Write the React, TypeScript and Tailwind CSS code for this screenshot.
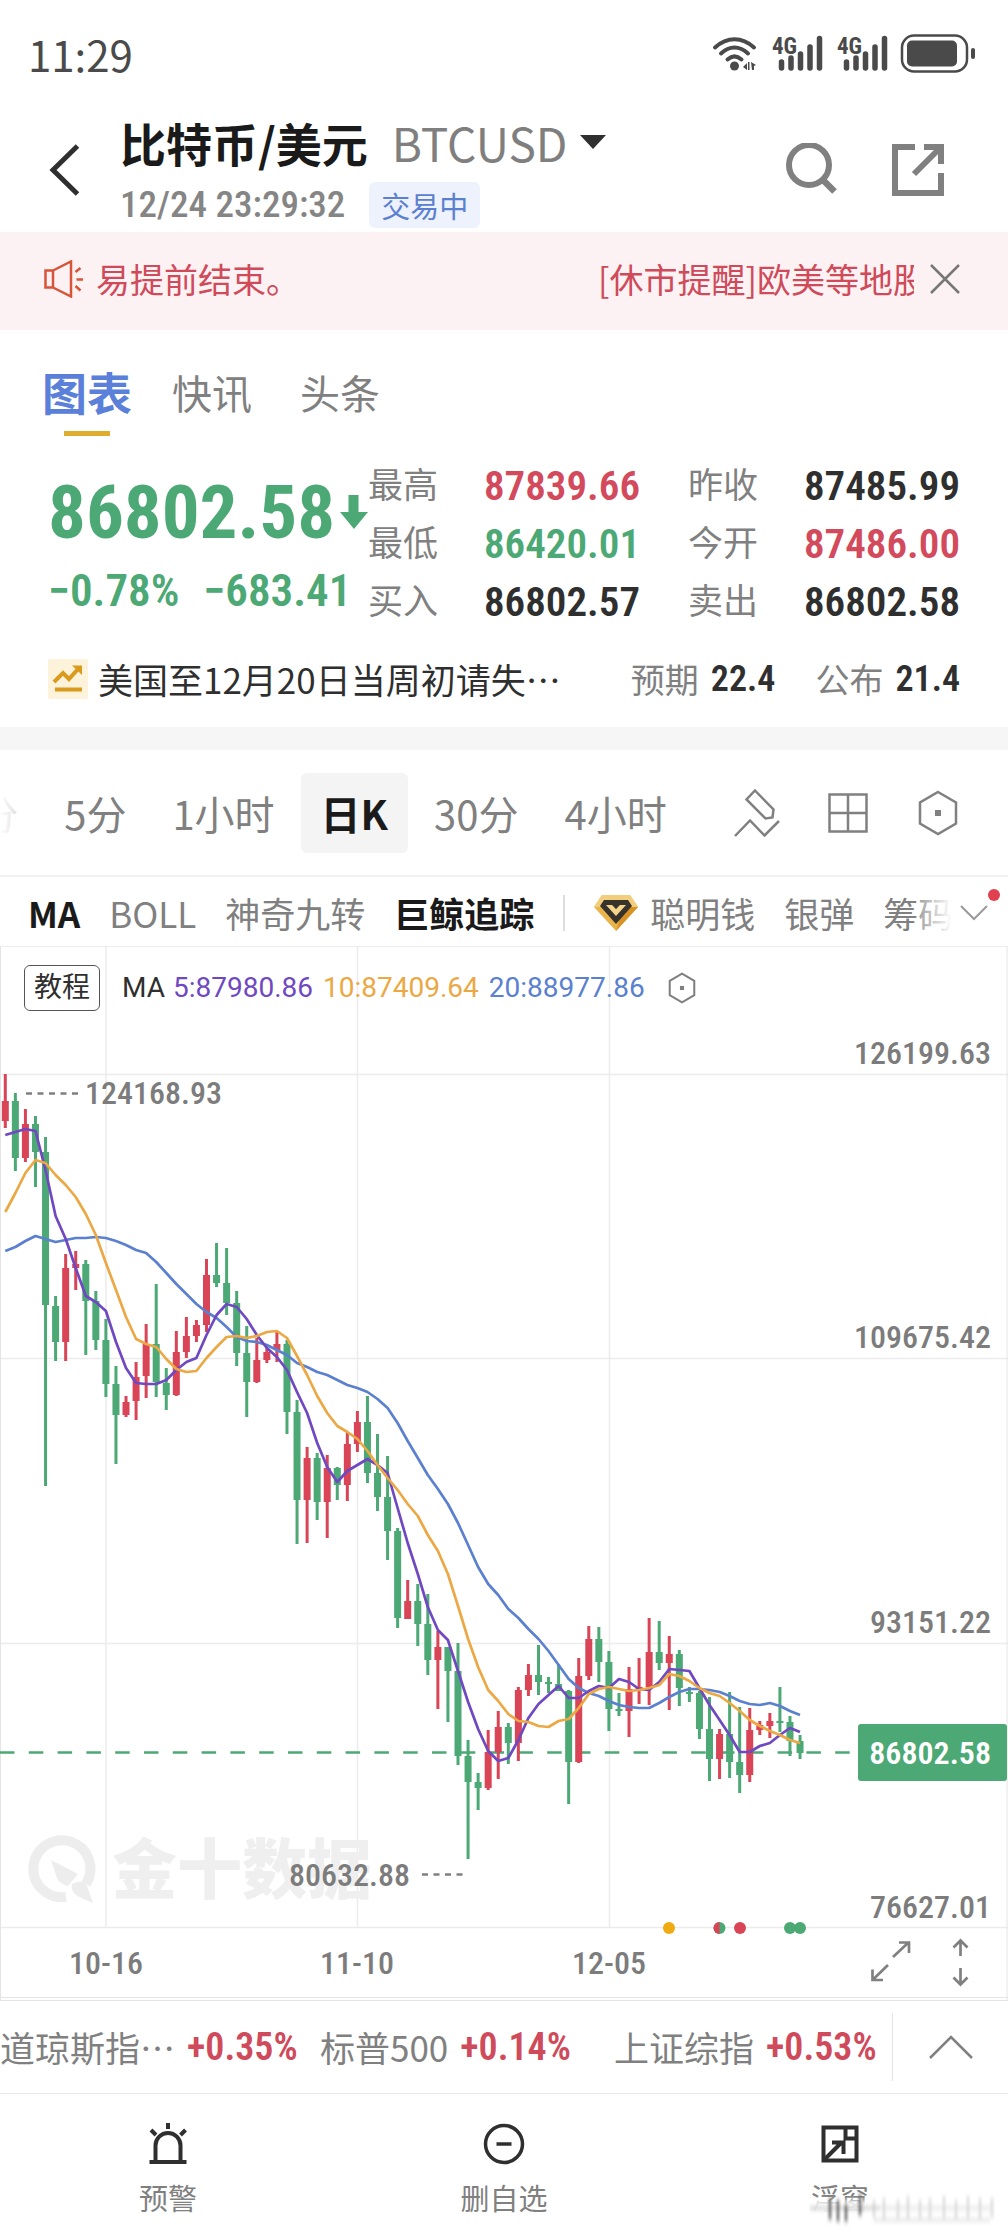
import React from "react";

// Font stacks
const UI_FONT = "[font-family:'Noto_Sans_CJK_SC',sans-serif]";
const NUM_FONT = "[font-family:'Roboto_Condensed','Liberation_Sans_Narrow','Roboto',sans-serif]";
const SVG_NUM_FONT = "'Roboto Condensed', 'Liberation Sans Narrow', Roboto, sans-serif";

const UP = "#d94556";
const DOWN = "#4ca874";

// [kind, wick top, body top, body bottom, wick bottom]
type Candle = ["u" | "d", number, number, number, number];

const candles: Candle[] = [
  ["u", 1074, 1101, 1121, 1128], ["d", 1093, 1101, 1158, 1171], ["u", 1109, 1124, 1158, 1162], ["d", 1116, 1124, 1152, 1187],
  ["d", 1137, 1152, 1305, 1486], ["d", 1296, 1306, 1342, 1361], ["u", 1254, 1268, 1342, 1361], ["u", 1251, 1264, 1268, 1290],
  ["d", 1260, 1264, 1301, 1355], ["d", 1291, 1301, 1340, 1350], ["d", 1319, 1340, 1384, 1397], ["d", 1366, 1384, 1415, 1464],
  ["u", 1396, 1402, 1415, 1417], ["u", 1362, 1377, 1401, 1420], ["u", 1324, 1344, 1376, 1398], ["d", 1284, 1344, 1382, 1397],
  ["d", 1368, 1383, 1395, 1410], ["u", 1331, 1352, 1395, 1396], ["u", 1317, 1336, 1352, 1358], ["u", 1320, 1325, 1336, 1342],
  ["u", 1259, 1275, 1325, 1332], ["d", 1243, 1275, 1283, 1287], ["d", 1248, 1283, 1303, 1315], ["d", 1291, 1303, 1353, 1366],
  ["d", 1326, 1353, 1382, 1417], ["u", 1338, 1360, 1382, 1383], ["u", 1348, 1352, 1360, 1363], ["u", 1332, 1344, 1350, 1362],
  ["d", 1340, 1344, 1412, 1434], ["d", 1400, 1412, 1500, 1544], ["u", 1447, 1458, 1500, 1543], ["d", 1453, 1458, 1502, 1520],
  ["u", 1455, 1468, 1502, 1538], ["d", 1467, 1468, 1485, 1500], ["u", 1432, 1444, 1485, 1501], ["u", 1411, 1422, 1444, 1452],
  ["d", 1396, 1422, 1473, 1483], ["d", 1434, 1473, 1497, 1511], ["d", 1456, 1497, 1531, 1560], ["d", 1528, 1531, 1618, 1628],
  ["u", 1580, 1601, 1619, 1619], ["d", 1584, 1601, 1624, 1646], ["d", 1594, 1624, 1660, 1675], ["u", 1631, 1647, 1660, 1709],
  ["d", 1647, 1647, 1671, 1722], ["d", 1643, 1671, 1756, 1765], ["d", 1740, 1756, 1782, 1859], ["d", 1773, 1782, 1788, 1810],
  ["u", 1730, 1752, 1788, 1790], ["u", 1711, 1727, 1752, 1779], ["d", 1723, 1727, 1743, 1764], ["u", 1687, 1690, 1743, 1761],
  ["u", 1664, 1675, 1690, 1696], ["d", 1645, 1675, 1682, 1695], ["d", 1677, 1682, 1684, 1693], ["d", 1664, 1684, 1691, 1691],
  ["d", 1690, 1691, 1762, 1804], ["u", 1658, 1676, 1762, 1763], ["u", 1626, 1639, 1676, 1680], ["d", 1627, 1639, 1662, 1682],
  ["d", 1651, 1662, 1709, 1731], ["d", 1693, 1709, 1711, 1716], ["u", 1667, 1689, 1711, 1737], ["u", 1658, 1687, 1689, 1704],
  ["u", 1618, 1652, 1687, 1705], ["d", 1621, 1652, 1663, 1670], ["u", 1636, 1654, 1663, 1710], ["d", 1650, 1654, 1688, 1706],
  ["d", 1687, 1692, 1694, 1702], ["d", 1691, 1693, 1729, 1739], ["d", 1697, 1729, 1759, 1781], ["u", 1729, 1734, 1759, 1779],
  ["d", 1692, 1734, 1762, 1778], ["d", 1707, 1762, 1775, 1793], ["u", 1708, 1730, 1775, 1782], ["u", 1721, 1725, 1730, 1735],
  ["u", 1713, 1721, 1726, 1738], ["d", 1687, 1721, 1722, 1732], ["d", 1716, 1722, 1741, 1756], ["d", 1735, 1741, 1753, 1759],
];

const ma5 = [
  1135, 1132, 1129, 1131, 1170, 1216, 1239, 1268, 1296, 1302, 1311, 1342, 1368, 1383, 1384, 1384, 1380, 1370, 1362, 1358,
  1335, 1315, 1304, 1307, 1319, 1335, 1348, 1357, 1370, 1392, 1413, 1443, 1467, 1482, 1471, 1465, 1459, 1465, 1473, 1508,
  1543, 1574, 1607, 1630, 1640, 1671, 1702, 1729, 1751, 1761, 1758, 1740, 1718, 1704, 1695, 1686, 1698, 1698, 1691, 1686,
  1688, 1679, 1682, 1689, 1690, 1682, 1669, 1670, 1671, 1688, 1705, 1720, 1735, 1752, 1752, 1746, 1743, 1735, 1728, 1732,
];
const ma10 = [
  1212, 1193, 1173, 1160, 1163, 1175, 1185, 1197, 1214, 1235, 1263, 1290, 1317, 1339, 1344, 1347, 1359, 1369, 1372, 1371,
  1358, 1347, 1337, 1336, 1338, 1336, 1332, 1331, 1338, 1356, 1375, 1396, 1413, 1426, 1432, 1439, 1451, 1465, 1478, 1490,
  1504, 1516, 1535, 1551, 1574, 1606, 1639, 1667, 1690, 1701, 1714, 1721, 1722, 1726, 1727, 1721, 1719, 1708, 1694, 1689,
  1687, 1689, 1691, 1690, 1688, 1685, 1674, 1676, 1681, 1688, 1693, 1696, 1703, 1711, 1720, 1726, 1731, 1735, 1740, 1743,
];
const ma20 = [
  1251, 1247, 1241, 1236, 1239, 1242, 1240, 1238, 1238, 1237, 1238, 1241, 1245, 1250, 1253, 1262, 1273, 1284, 1294, 1304,
  1312, 1318, 1327, 1337, 1341, 1342, 1345, 1350, 1355, 1363, 1367, 1372, 1375, 1380, 1385, 1388, 1392, 1399, 1408, 1423,
  1441, 1458, 1475, 1489, 1504, 1523, 1545, 1567, 1584, 1595, 1609, 1618, 1629, 1639, 1651, 1665, 1679, 1688, 1693, 1696,
  1701, 1705, 1707, 1708, 1708, 1703, 1697, 1692, 1689, 1689, 1690, 1692, 1696, 1701, 1704, 1705, 1703, 1706, 1711, 1715,
];

const xAt = (i: number) => 5.3 + i * 10.06;
const toPoints = (ys: number[]) => ys.map((y, i) => `${xAt(i).toFixed(1)},${y}`).join(" ");

const priceLabels = [
  { text: "126199.63", y: 1064 },
  { text: "109675.42", y: 1348 },
  { text: "93151.22", y: 1633 },
  { text: "76627.01", y: 1918 },
];

const dateLabels = [
  { text: "10-16", x: 106 },
  { text: "11-10", x: 357 },
  { text: "12-05", x: 609 },
];

function StatusBar() {
  return (
    <div className="flex items-center justify-between pt-7 pr-8 pl-7 text-[#4a4a4a]">
      <span className="text-[42px] leading-[52px]">11:29</span>
      <svg className="h-10 w-[264px]" viewBox="0 0 264 40" fill="none">
        <g stroke="#4a4a4a" strokeWidth="4" strokeLinecap="round">
          <path d="M3 13.5C15 2.5 30 2.5 42 13.5" />
          <path d="M9 19.5C17.5 11.5 27.5 11.5 36 19.5" />
          <path d="M15.5 25.5C20 21.5 25 21.5 29.5 25.5" />
        </g>
        <circle cx="22.5" cy="32" r="4.5" fill="#4a4a4a" />
        <path d="M31 33l4-4v7zM36 28h1.5v8H36zM39 28l5 3-2 1v4h-2z" fill="#4a4a4a" />
        {[0, 65].map((dx) => (
          <g key={dx} transform={`translate(${dx} 0)`}>
            <text x="60" y="20" fontSize="23" fontWeight="700" fill="#4a4a4a" fontFamily={SVG_NUM_FONT}>
              4G
            </text>
            <path
              d="M69.500 28v6M79 24v10M88.500 20v14M98 13v21M107.500 4.500v29.500"
              stroke="#4a4a4a"
              strokeWidth="5.5"
              strokeLinecap="round"
            />
          </g>
        ))}
        <rect x="190" y="1.500" width="65" height="36" rx="12" stroke="#4a4a4a" strokeWidth="2.5" />
        <rect x="195" y="6.500" width="50" height="26" rx="5" fill="#4a4a4a" />
        <rect x="259" y="14" width="4" height="11" rx="2" fill="#4a4a4a" />
      </svg>
    </div>
  );
}

function Header() {
  return (
    <header className="flex h-[128px] items-center pt-1 pr-16 pl-12">
      <button type="button" aria-label="返回" className="mr-10">
        <svg className="h-[52px] w-8" viewBox="0 0 32 52" fill="none">
          <path d="M29.5 2L5 26L29.5 50" stroke="#2f2f2f" strokeWidth="5" />
        </svg>
      </button>
      <div className="flex-1">
        <h1 className="mb-[10px] flex items-center text-[46px] leading-[60px] font-bold text-[#1a1a1a]">
          比特币/美元
          <span className="ml-6 text-[46px] font-normal text-[#7f7f7f]">BTCUSD</span>
          <svg className="ml-3 h-[14px] w-[26px]" viewBox="0 0 26 14">
            <path d="M0 0h26L13 14z" fill="#2f2f2f" />
          </svg>
        </h1>
        <div className="flex items-center gap-6">
          <time className={`${NUM_FONT} text-[37px] leading-[46px] font-medium text-[#858585]`}>12/24 23:29:32</time>
          <span className="rounded-[6px] bg-[#edf2fd] px-3 text-[29px] leading-[46px] text-[#5b80cf]">交易中</span>
        </div>
      </div>
      <div className="flex items-center gap-[54px]">
        <button type="button" aria-label="搜索">
          <svg className="h-[54px] w-[54px]" viewBox="0 0 54 54" fill="none" stroke="#808080">
            <circle cx="25" cy="22" r="20" strokeWidth="6" />
            <path d="M38.5 36.5L50.5 48.5" strokeWidth="6.5" />
          </svg>
        </button>
        <button type="button" aria-label="分享">
          <svg className="h-[52px] w-[52px]" viewBox="0 0 52 52" fill="none" stroke="#808080" strokeWidth="6">
            <path d="M23 3H3v46h46V29" />
            <path d="M32 3h17v17M48 4L22 30" />
          </svg>
        </button>
      </div>
    </header>
  );
}

function Notice() {
  return (
    <div className="flex h-[98px] items-center bg-[#fdf2f3] pr-[48px] pb-1 pl-11 text-[34px] leading-[50px] text-[#cf4a5a]">
      <svg className="mr-[13px] h-[38px] w-[39px] shrink-0" viewBox="0 0 39 38" fill="none" stroke="#d75438" strokeWidth="2.5">
        <path d="M1.5 10.5h7.5v17H1.5zM9 10.5L27 1.5v35L9 27.5" />
        <path d="M31.5 12l5-4M32.5 19.5h7M31.5 26l5 4.5" />
      </svg>
      <div className="flex flex-1 gap-[298px] overflow-hidden whitespace-nowrap">
        <span>易提前结束。</span>
        <span>[休市提醒]欧美等地股</span>
      </div>
      <button type="button" aria-label="关闭" className="ml-4">
        <svg className="h-[30px] w-[30px]" viewBox="0 0 30 30" fill="none" stroke="#777" strokeWidth="2.5">
          <path d="M1 1l28 28M29 1L1 29" />
        </svg>
      </button>
    </div>
  );
}

function Tabs() {
  return (
    <nav className="flex h-[106px] items-end gap-10 pl-[42px] text-[40px] leading-[56px] text-[#808080]">
      <a href="#chart" className="flex flex-col items-center text-[45px] font-bold text-[#5a80da]">
        图表
        <span className="mt-[11px] h-[5px] w-[46px] bg-[#e0ac2e]" />
      </a>
      <a href="#flash" className="mb-4">快讯</a>
      <a href="#headline" className="mb-4 ml-2">头条</a>
    </nav>
  );
}

const stats = [
  { label: "最高", value: "87839.66", color: "text-[#d24a5c]" },
  { label: "昨收", value: "87485.99", color: "text-[#2f2f2f]" },
  { label: "最低", value: "86420.01", color: "text-[#4ca874]" },
  { label: "今开", value: "87486.00", color: "text-[#d24a5c]" },
  { label: "买入", value: "86802.57", color: "text-[#2f2f2f]" },
  { label: "卖出", value: "86802.58", color: "text-[#2f2f2f]" },
];

function Quote() {
  return (
    <section className="flex pt-[21px] pr-12 pl-12">
      <div className={`${NUM_FONT} w-[320px] shrink-0 font-bold text-[#4ca874]`}>
        <div className="flex items-center justify-between pt-3">
          <span className="text-[75px] leading-[86px]">86802.58</span>
          <svg className="h-[34px] w-7" viewBox="0 0 28 34" fill={DOWN}>
            <path d="M8.5 0h10v17H28L14 34L0 17h8.5z" />
          </svg>
        </div>
        <div className="flex gap-6 text-[45px] leading-[72px] font-semibold">
          <span>−0.78%</span>
          <span>−683.41</span>
        </div>
      </div>
      <dl className="grid flex-1 grid-cols-2 gap-x-12 text-[35px] leading-[58px]">
        {stats.map((s) => (
          <div key={s.label} className="flex justify-between">
            <dt className="leading-[52px] text-[#808080]">{s.label}</dt>
            <dd className={`${NUM_FONT} text-[41px] font-semibold ${s.color}`}>{s.value}</dd>
          </div>
        ))}
      </dl>
    </section>
  );
}

function NewsRow() {
  return (
    <div className="flex items-center pt-5 pr-12 pb-5 pl-12 text-[34px] leading-[56px] text-[#808080]">
      <svg className="h-10 w-10 shrink-0" viewBox="0 0 40 40" fill="none" stroke="#d99a1e" strokeWidth="4">
        <rect width="40" height="40" rx="2" fill="#fdf3da" stroke="none" />
        <path d="M6 23l9-9 6 6 9-10" />
        <path d="M24 6.500h10V16z" fill="#d99a1e" stroke="none" />
        <path d="M7 30.500h27" />
      </svg>
      <a href="#news" className="ml-[10px] flex-1 truncate text-[35px] text-[#2f2f2f]">美国至12月20日当周初请失…</a>
      <span>预期</span>
      <b className={`${NUM_FONT} ml-3 text-[36px] font-semibold text-[#2f2f2f]`}>22.4</b>
      <span className="ml-10">公布</span>
      <b className={`${NUM_FONT} ml-3 text-[36px] font-semibold text-[#2f2f2f]`}>21.4</b>
    </div>
  );
}

const hexagon = "M22 2L40 12.5V33.5L22 44L4 33.5V12.5Z";

function Periods() {
  return (
    <div className="relative flex h-[127px] items-center overflow-hidden border-b-2 border-[#f1f1f1] pr-12 text-[40px] leading-[56px] whitespace-nowrap text-[#808080]">
      <div className="-ml-[64px] flex flex-1 gap-[6px]">
        {["1分", "5分", "1小时", "日K", "30分", "4小时"].map((p) => (
          <button
            key={p}
            type="button"
            className={`h-20 px-5 ${p === "日K" ? "rounded-[6px] bg-[#f4f4f4] font-bold text-[#1a1a1a]" : ""}`}
          >
            {p}
          </button>
        ))}
      </div>
      <div className="absolute top-0 left-0 h-full w-7 bg-gradient-to-r from-white to-white/60" />
      <div className="flex items-center gap-12">
        <button type="button" aria-label="画线">
          <svg className="h-12 w-[46px]" viewBox="0 0 46 48" fill="none" stroke="#808080" strokeWidth="2.5">
            <path d="M21 1.5L39.5 20.5L38.5 28.5L31.5 29.5L12.5 10.5Z" />
            <path d="M1 47L16 31.5L30.5 46.5L45 32" />
          </svg>
        </button>
        <button type="button" aria-label="多图">
          <svg className="h-10 w-10" viewBox="0 0 40 40" fill="none" stroke="#808080" strokeWidth="2.5">
            <path d="M1.5 1.5h37v37h-37zM20 1.5v37M1.5 20h37" />
          </svg>
        </button>
        <button type="button" aria-label="设置">
          <svg className="h-[46px] w-11" viewBox="0 0 44 46" fill="none" stroke="#808080" strokeWidth="2.5">
            <path d={hexagon} />
            <rect x="19" y="20" width="6" height="6" fill="#808080" stroke="none" />
          </svg>
        </button>
      </div>
    </div>
  );
}

function Indicators() {
  return (
    <div className="flex h-[70px] items-center border-b border-[#ececec] pt-[2px] pr-5 pl-7 text-[35px] leading-[52px] whitespace-nowrap text-[#808080]">
      <div className="relative flex flex-1 items-center gap-[29px] overflow-hidden">
        <button type="button" className="font-bold text-[#1a1a1a]">MA</button>
        <button type="button">BOLL</button>
        <button type="button">神奇九转</button>
        <button type="button" className="font-bold text-[#1a1a1a]">巨鲸追踪</button>
        <span className="h-9 w-[2px] shrink-0 bg-[#dedede]" />
        <button type="button" className="flex items-center gap-3">
          <svg className="h-9 w-11" viewBox="0 0 44 36">
            <path d="M8 0h28l8 12L22 36L0 12z" fill="#e9b44a" />
            <path d="M8 0h28l8 12H0z" fill="#f2cd7c" />
            <path d="M22 36l22-24H30z" fill="#d99325" />
            <path d="M10 5h24l4 6L22 29L6 11z" fill="#38322c" />
            <path d="M12 10h6l4 4 4-4h6L22 21z" fill="#f5d58c" />
            <path d="M19 9h6l-3 5z" fill="#38322c" />
          </svg>
          聪明钱
        </button>
        <button type="button">银弹</button>
        <button type="button">筹码</button>
        <div className="absolute top-0 right-0 h-full w-9 bg-gradient-to-r from-white/20 to-white" />
      </div>
      <button type="button" aria-label="展开" className="relative ml-2">
        <svg className="h-4 w-7" viewBox="0 0 28 16" fill="none" stroke="#9a9a9a" strokeWidth="2">
          <path d="M1 1l13 13L27 1" />
        </svg>
        <span className="absolute -top-4 -right-3 h-3 w-3 rounded-full bg-[#e0404f]" />
      </button>
    </div>
  );
}

function Chart() {
  return (
    <section className="relative">
      <svg className="block w-full" viewBox="0 947 1008 1054" fill="none">
        {/* Grid */}
        <path
          d="M0 1074.5H1008M0 1358.5H1008M0 1643.5H1008M0 1927.5H1008M106 947V1927M357.5 947V1927M609.5 947V1927"
          stroke="#ececec"
          strokeWidth="1.5"
        />
        <path d="M0 1997.5H1008M0 2000.5H1008M0.5 947V2000M1007 947V2000" stroke="#e4e4e4" />

        {/* Watermark logo */}
        <g>
          <path d="M66 1897A28.5 28.5 0 1 1 86 1884" stroke="#ededed" strokeWidth="10" />
          <path d="M51 1860L78 1874L68 1886Q60 1884 57 1878Z" fill="#ededed" />
          <path d="M72 1884Q82 1878 87 1886L93 1903L79 1897Q70 1892 72 1884Z" fill="#ededed" />
          <text x="112" y="1893" fontSize="65" fontWeight="900" fill="#efefef" fontFamily="'Noto Sans CJK SC', sans-serif">
            金十数据
          </text>
        </g>

        {/* Last price line */}
        <path d="M0 1752.5H858" stroke={DOWN} strokeWidth="2.5" strokeDasharray="14.5 14.3" />

        {candles.map(([kind, high, top, bottom, low], i) => (
          <g key={i} fill={kind === "u" ? UP : DOWN}>
            <rect x={xAt(i) - 1.5} y={high} width="3" height={low - high} />
            <rect x={xAt(i) - 3.5} y={top} width="7" height={Math.max(bottom - top, 2)} />
          </g>
        ))}

        <g strokeWidth="2.7" strokeLinejoin="round">
          <polyline points={toPoints(ma20)} stroke="#5b80cf" />
          <polyline points={toPoints(ma5)} stroke="#6f48c2" />
          <polyline points={toPoints(ma10)} stroke="#eba844" />
        </g>

        {/* High / low marks */}
        <path d="M26 1093.5H80" stroke="#808080" strokeWidth="2.5" strokeDasharray="6 5.5" />
        <path d="M422 1874.5H464" stroke="#808080" strokeWidth="2.5" strokeDasharray="6 5.5" />
        <g fontFamily={SVG_NUM_FONT} fontSize="32" fontWeight="500" fill="#7c7c7c">
          <text x="85" y="1104">124168.93</text>
          <text x="410" y="1886" textAnchor="end">80632.88</text>
          {priceLabels.map((p) => (
            <text key={p.text} x="991" y={p.y} textAnchor="end">{p.text}</text>
          ))}
          {dateLabels.map((d) => (
            <text key={d.text} x={d.x} y="1974" textAnchor="middle">{d.text}</text>
          ))}
        </g>

        {/* Current price tag */}
        <rect x="858" y="1724" width="149" height="57" rx="3" fill="#4ca874" />
        <text x="991" y="1764" textAnchor="end" fontFamily={SVG_NUM_FONT} fontSize="32" fontWeight="600" fill="#fff">
          86802.58
        </text>

        {/* Event dots */}
        <circle cx="669" cy="1928" r="6" fill="#f0aa12" />
        <circle cx="719.5" cy="1928" r="6" fill={DOWN} />
        <path d="M719.5 1922a6 6 0 0 0 0 12z" fill={UP} />
        <circle cx="740" cy="1928" r="6" fill={UP} />
        <circle cx="790" cy="1928" r="6" fill={DOWN} />
        <circle cx="800" cy="1928" r="6" fill={DOWN} />

        {/* Zoom handles */}
        <g stroke="#808080" strokeWidth="2.7">
          <path d="M893 1957L909 1942M899 1942.5H909V1953M888 1965L872.5 1980M872.5 1969.5V1980H883" />
          <path d="M960.5 1956V1940M953.5 1947.5L960.5 1940.5L967.5 1947.5M960.5 1968V1985M953.5 1977.5L960.5 1984.5L967.5 1977.5" />
        </g>
      </svg>

      {/* MA legend */}
      <div className="absolute top-[18px] left-6 flex items-center [font-family:Roboto,'Noto_Sans_CJK_SC',sans-serif] text-[28px] leading-[44px] whitespace-nowrap">
        <button type="button" className="mr-[22px] rounded-[6px] border border-[#555] px-[9px] text-[#2f2f2f]">教程</button>
        <span className="text-[#2f2f2f]">MA</span>
        <span className="ml-2 text-[#6f48c2]">5:87980.86</span>
        <span className="ml-[10px] text-[#eba844]">10:87409.64</span>
        <span className="ml-[10px] text-[#5b80cf]">20:88977.86</span>
        <button type="button" aria-label="指标设置" className="ml-[22px]">
          <svg className="h-8 w-[30px]" viewBox="0 0 44 46" fill="none" stroke="#808080" strokeWidth="3">
            <path d={hexagon} />
            <rect x="19" y="20" width="6" height="6" fill="#808080" stroke="none" />
          </svg>
        </button>
      </div>
    </section>
  );
}

const indices = [
  { name: "道琼斯指…", change: "+0.35%" },
  { name: "标普500", change: "+0.14%" },
  { name: "上证综指", change: "+0.53%" },
];

function Ticker() {
  return (
    <div className="flex h-[93px] items-center border-b border-[#e8e8e8] text-[35px] leading-[52px] whitespace-nowrap text-[#808080]">
      <ul className="grid flex-1 grid-cols-[320fr_294fr_278fr]">
        {indices.map((it) => (
          <li key={it.name} className="flex items-center gap-3">
            {it.name}
            <b className={`${NUM_FONT} text-[38px] font-semibold text-[#cf4a5a]`}>{it.change}</b>
          </li>
        ))}
      </ul>
      <button type="button" aria-label="展开行情" className="flex h-[68px] w-[116px] items-center border-l border-[#e4e4e4] pl-9">
        <svg className="h-6 w-11" viewBox="0 0 44 24" fill="none" stroke="#808080" strokeWidth="2.5">
          <path d="M1 23L22 2L43 23" />
        </svg>
      </button>
    </div>
  );
}

function BottomBar() {
  return (
    <nav className="relative grid grid-cols-3 pt-7 pb-[14px] text-[29px] leading-[42px] text-[#808080]">
      <button type="button" className="flex flex-col items-center gap-[10px]">
        <svg className="h-11 w-11" viewBox="0 0 44 44" fill="none" stroke="#2f2f2f" strokeWidth="4">
          <path d="M3.5 40h37M9.5 40V23.5a12.5 12.5 0 0 1 25 0V40M22 1v6M5 8l5 5M39.5 8l-5 5" />
        </svg>
        预警
      </button>
      <button type="button" className="flex flex-col items-center gap-[10px]">
        <svg className="h-11 w-11" viewBox="0 0 44 44" fill="none" stroke="#2f2f2f" strokeWidth="3.5">
          <circle cx="22" cy="22" r="18.5" />
          <path d="M14.5 22h15" />
        </svg>
        删自选
      </button>
      <button type="button" className="flex flex-col items-center gap-[10px]">
        <svg className="h-11 w-11" viewBox="0 0 44 44" fill="none" stroke="#2f2f2f" strokeWidth="4">
          <path d="M5.5 5.5h33v33h-33z" />
          <path d="M27.5 5v11.5H39M7 37L23 21M14 20.5h11.5V32" />
        </svg>
        浮窗
      </button>
      {/* Smudged stamp over the corner */}
      <svg className="absolute right-2 bottom-1 h-9 w-[192px]" viewBox="0 0 192 36">
        <defs>
          <filter id="smudge" x="-10%" y="-30%" width="120%" height="160%">
            <feGaussianBlur stdDeviation="1.2 2.5" />
          </filter>
        </defs>
        <g filter="url(#smudge)">
          <rect x="2" y="8" width="186" height="26" fill="#fff" opacity="0.9" />
          <path d="M2 16h70" stroke="#999" strokeWidth="2" />
          <path d="M22 6v22M30 8v22M38 12v18M52 2v22" stroke="#666" strokeWidth="4" opacity="0.7" />
          <path
            d="M66 8v18M76 6v22M90 8v18M100 4v22M112 8v18M122 6v20M136 4v22M148 8v18M160 4v22M172 6v20M184 6v20M60 16h124M66 28h116"
            stroke="#ccc"
            strokeWidth="3"
            opacity="0.6"
          />
        </g>
      </svg>
    </nav>
  );
}

export default function App() {
  return (
    <main lang="zh-CN" className={`${UI_FONT} min-h-screen overflow-hidden bg-white`}>
      <StatusBar />
      <div className="pt-6">
        <Header />
      </div>
      <Notice />
      <Tabs />
      <Quote />
      <NewsRow />
      <div className="h-[23px] bg-[#f6f6f6]" />
      <Periods />
      <Indicators />
      <Chart />
      <Ticker />
      <BottomBar />
    </main>
  );
}
